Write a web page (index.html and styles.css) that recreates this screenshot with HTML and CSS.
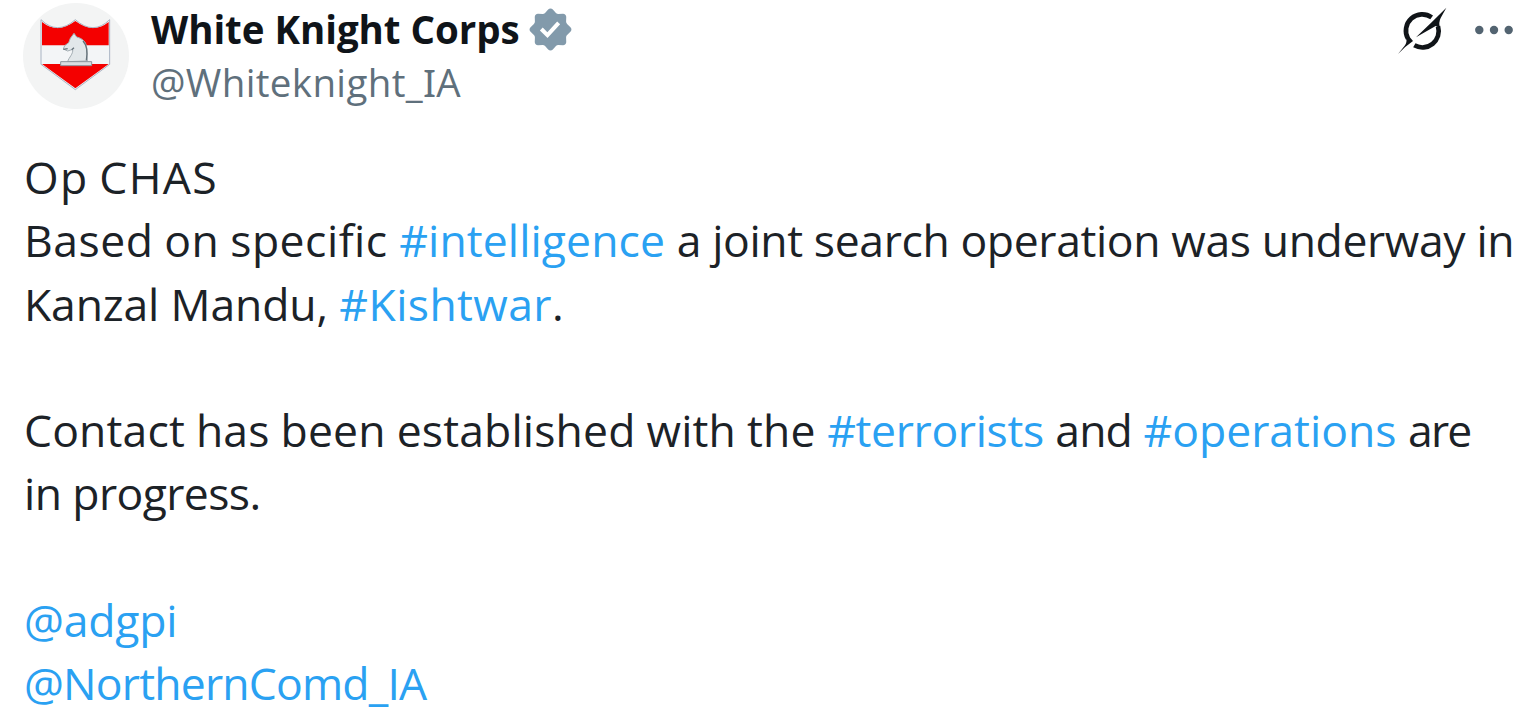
FILE: index.html
```html
<!DOCTYPE html>
<html lang="en">
<head>
  <meta charset="UTF-8">
  <meta name="viewport" content="width=device-width, initial-scale=1.0">
  <title>White Knight Corps</title>
  <link rel="stylesheet" href="styles.css">
</head>
<body>
  <article class="post">
    <header class="post-header">
      <svg class="avatar" viewBox="0 0 318 318">
        <circle cx="159" cy="159" r="159" fill="#f3f4f4"/>
        <path d="M54 50Q103 98 157 50Q211 98 260 50V184L157 260L54 184Z" fill="#f3f5f7"/>
        <path d="M57 57Q103 94 157 54Q211 94 257 57V127H57Z" fill="#f40000"/>
        <path d="M57 183H257L157 256Z" fill="#f40000"/>
        <path d="M54 50Q103 98 157 50Q211 98 260 50V184L157 260L54 184Z" fill="none" stroke="#a9b4c4" stroke-width="3"/>
        <path d="M134 176C138 162 151 154 149 139L134 144L121 138L125 128L137 119L142 106L153 91L161 102C181 107 192 119 191 139L193 174Z" fill="#e2e7ea" stroke="#a3adb3" stroke-width="3"/>
        <path d="M180 114C192 127 194 150 190 172M121 139L134 137M146 140L153 134" fill="none" stroke="#65727a" stroke-width="4"/>
        <path d="M113 176H206V188H113Z" fill="#d9dee2" stroke="#8a959c" stroke-width="3"/>
      </svg>
      <div class="author">
        <div class="name-row">
          <span class="name">White Knight Corps</span>
          <svg class="badge" viewBox="0 0 22 22"><path fill="#829aab" d="M12.05 2.056c-.568-.608-1.532-.608-2.1 0l-1.393 1.49c-.284.303-.685.47-1.1.455L5.42 3.932c-.832-.028-1.514.654-1.486 1.486l.069 2.039c.014.415-.152.816-.456 1.1l-1.49 1.392c-.608.568-.608 1.533 0 2.101l1.49 1.393c.304.284.47.684.456 1.1l-.07 2.038c-.027.832.655 1.514 1.487 1.486l2.038-.069c.415-.014.816.152 1.1.455l1.392 1.49c.569.609 1.533.609 2.102 0l1.393-1.49c.283-.303.684-.47 1.099-.455l2.038.069c.832.028 1.515-.654 1.486-1.486L18 14.542c-.015-.415.152-.815.455-1.099l1.49-1.393c.608-.568.608-1.533 0-2.101l-1.49-1.393c-.303-.283-.47-.684-.455-1.1l.068-2.038c.029-.832-.654-1.514-1.486-1.486l-2.038.07c-.415.013-.816-.153-1.1-.456zm-5.817 9.367l1.292-1.307 2.075 2.075 4.394-4.791 1.34 1.247-5.662 6.206-3.439-3.43z"/></svg>
        </div>
        <div class="handle">@Whiteknight_<span class="serif-i">I</span>A</div>
      </div>
      <div class="actions">
        <svg class="grok" viewBox="50 19 150 144" fill="#101418">
          <path d="M154 50A49 49 0 0 0 83 114" fill="none" stroke="#101418" stroke-width="14"/>
          <path d="M102 134A49 49 0 0 0 173 77" fill="none" stroke="#101418" stroke-width="14"/>
          <path d="M76 110Q82 124 73 135L53 160Q73 138 98 121L88 109Z"/>
          <path d="M179 82Q174 66 181 52L198 21L154 65L107 110L166 76Z"/>
        </svg>
        <svg class="more" viewBox="0 0 38 10" fill="#536471">
          <circle cx="4.3" cy="5" r="4.2"/>
          <circle cx="19" cy="5" r="4.2"/>
          <circle cx="33.7" cy="5" r="4.2"/>
        </svg>
      </div>
    </header>

    <div class="post-text">
      <p><span class="seg-op">Op CHAS</span></p>
      <p><span class="seg-based">Based on specific</span> <a class="seg-intel">#intelligence</a> <span class="seg-joint">a joint search operation was underway in</span></p>
      <p><span class="seg-kanzal">Kanzal Mandu,</span> <a class="seg-kisht">#Kishtwar</a>.</p>
      <p class="gap"><span class="seg-contact">Contact has been established with the</span> <a class="seg-terror">#terrorists</a> <span class="seg-and">and</span> <a>#operations</a> <span class="seg-are">are</span></p>
      <p><span class="seg-progress">in progress.</span></p>
      <p class="gap"><a class="seg-adgpi">@adgpi</a></p>
      <p><a class="seg-north">@NorthernComd_IA</a></p>
    </div>
  </article>
</body>
</html>
```
FILE: styles.css
```css
body {
  margin: 0;
  background: #fff;
  color: #0f1419;
  font-family: "Open Sans", "Noto Sans", sans-serif;
  overflow: hidden;
}
.post {
  height: 723px;
  box-sizing: border-box;
  padding: 3px 15px 0 23px;
}
.post-header {
  display: flex;
  height: 142px;
}
.avatar {
  width: 106px;
  height: 106px;
  flex: none;
}
.author {
  margin-left: 22px;
}
.name-row {
  display: flex;
  align-items: center;
  height: 53px;
}
.name {
  font-size: 38.5px;
  font-weight: 700;
  line-height: 53px;
  letter-spacing: -0.05px;
}
.badge {
  width: 49px;
  height: 49px;
  margin-left: 6px;
}
.handle {
  font-size: 38.5px;
  line-height: 53px;
  letter-spacing: 0.35px;
  color: #5f707c;
}
.serif-i {
  font-family: "Noto Sans", sans-serif;
}
.actions {
  display: flex;
  margin-left: auto;
}
.grok {
  width: 50px;
  height: 48px;
  margin-top: 4px;
}
.more {
  width: 38px;
  height: 10px;
  margin: 22px 0 0 28px;
}
.post-text {
  padding-left: 1px;
  font-size: 44.5px;
  font-weight: 430;
  line-height: 63.25px;
  color: #1c2227;
}
.post-text p {
  margin: 0;
  white-space: nowrap;
}
.post-text .gap {
  margin-top: 63.25px;
}
.post-text a {
  color: #2aa1f2;
}

/* tracking per run of text */
.seg-op {
  letter-spacing: 1.3px;
  word-spacing: -2px;
}
.seg-based {
  letter-spacing: 0.5px;
  word-spacing: -1.2px;
}
.seg-intel {
  letter-spacing: 0.1px;
}
.seg-joint {
  letter-spacing: -0.38px;
}
.seg-kanzal {
  letter-spacing: -0.15px;
}
.seg-kisht {
  letter-spacing: 0.4px;
}
.seg-contact {
  letter-spacing: 0.15px;
  word-spacing: -0.7px;
}
.seg-terror {
  letter-spacing: -0.35px;
}
.seg-and {
  letter-spacing: -0.9px;
}
.seg-are {
  letter-spacing: -1.8px;
}
.seg-progress {
  letter-spacing: -0.6px;
}
.seg-adgpi {
  letter-spacing: -0.2px;
}
.seg-north {
  letter-spacing: -0.8px;
}
```
